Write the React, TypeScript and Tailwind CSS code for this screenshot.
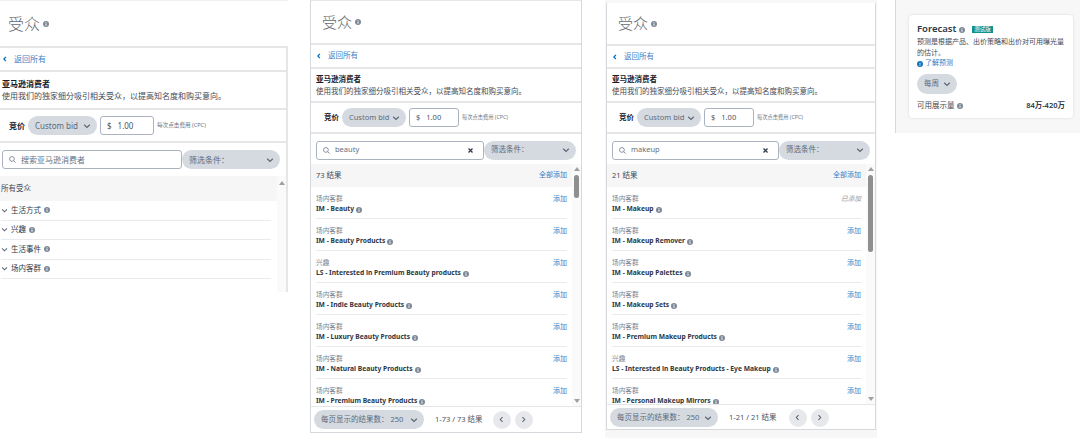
import React from "react";

const font = { fontFamily: '"Noto Sans", "Noto Sans CJK SC", sans-serif' };

function Info({ size = 6 }: { size?: number }) {
  return (
    <svg width={size} height={size} viewBox="0 0 10 10" className="inline-block shrink-0">
      <circle cx="5" cy="5" r="5" fill="#7d8998" />
      <rect x="4.2" y="4.2" width="1.6" height="3.6" fill="#fff" />
      <rect x="4.2" y="2.2" width="1.6" height="1.3" fill="#fff" />
    </svg>
  );
}

function Chevron({ dir = "down", size = 8, color = "#5b6675", width = 1.5 }: { dir?: "down" | "left" | "right"; size?: number; color?: string; width?: number }) {
  const d = dir === "down" ? "M1.5 3.5 5 6.8 8.5 3.5" : dir === "left" ? "M6.5 1.5 3.2 5 6.5 8.5" : "M3.5 1.5 6.8 5 3.5 8.5";
  return (
    <svg width={size} height={size} viewBox="0 0 10 10" fill="none" stroke={color} strokeWidth={width} className="shrink-0">
      <path d={d} />
    </svg>
  );
}

function Search() {
  return (
    <svg width="7" height="7" viewBox="0 0 10 10" fill="none" stroke="#7d8998" strokeWidth="1.3" className="shrink-0">
      <circle cx="4.2" cy="4.2" r="3.4" />
      <path d="M6.6 6.6 9.4 9.4" />
    </svg>
  );
}

function Pill({ className, children }: { className: string; children: React.ReactNode }) {
  return <div className={`flex items-center rounded-full bg-[#d5dae1] whitespace-nowrap text-[#5d6a79] ${className}`}>{children}</div>;
}

function Head({ h, pl, text }: { h: string; pl: string; text: string }) {
  return (
    <div className={`flex items-center gap-[3px] ${h} ${pl}`}>
      <span className={`leading-none font-light text-[#666b71] ${text}`}>受众</span>
      <Info />
    </div>
  );
}

function Intro({ pl, backH, descH }: { pl: string; backH: string; descH: string }) {
  return (
    <>
      <div className={`flex items-center gap-[6px] border-b-2 border-[#e4e6e8] ${backH} ${pl}`}>
        <Chevron dir="left" size={6} color="#0f6fc0" width={2.2} />
        <span className="text-[#3d84c6]">返回所有</span>
      </div>
      <div className={`flex flex-col justify-center border-b-2 border-[#e4e6e8] ${descH} ${pl}`}>
        <div className="leading-[12px] font-bold text-[#16202c]">亚马逊消费者</div>
        <div className="leading-[12px] whitespace-nowrap text-[#3f4a57]">使用我们的独家细分吸引相关受众，以提高知名度和购买意向。</div>
      </div>
    </>
  );
}

function Bid({ pl, h, pillW, inputW, unit }: { pl: string; h: string; pillW: string; inputW: string; unit: string }) {
  return (
    <div className={`flex items-center border-b-2 border-[#e4e6e8] ${h} ${pl}`}>
      <span className="mr-[3px] font-bold text-[#16202c]">竞价</span>
      <Pill className={`h-[19px] justify-between pr-[6px] pl-[7px] ${pillW}`}>
        <span>Custom bid</span>
        <Chevron />
      </Pill>
      <div className={`ml-[3px] flex h-[19px] items-center gap-[6px] rounded-[3px] border border-[#aab3bf] pl-[6px] text-[#4b5563] ${inputW}`}>
        <span>$</span>
        <span>1.00</span>
      </div>
      <span className={`ml-[3px] whitespace-nowrap text-[#6b7683] ${unit}`}>每次点击费用 (CPC)</span>
    </div>
  );
}

function SearchBar({ value, clear = false, h, pl, w, pillW }: { value: string; clear?: boolean; h: string; pl: string; w: string; pillW: string }) {
  return (
    <div className={`flex items-center ${h} ${pl}`}>
      <div className={`flex h-[19px] items-center gap-[5px] rounded-[3px] border border-[#aab3bf] px-[6px] text-[#66717e] ${w}`}>
        <Search />
        <span className="flex-1">{value}</span>
        {clear && (
          <svg width="5" height="5" viewBox="0 0 10 10" stroke="#333c47" strokeWidth="2.6" className="mr-[4px] shrink-0">
            <path d="M1 1 9 9M9 1 1 9" />
          </svg>
        )}
      </div>
      <Pill className={`h-[19px] justify-between pr-[6px] pl-[7px] ${pillW}`}>
        <span>筛选条件：</span>
        <Chevron />
      </Pill>
    </div>
  );
}

type Row = { cat: string; name: string; added?: boolean };

function Results({ count, rows, h, thumbH, listW }: { count: string; rows: Row[]; h: string; thumbH: string; listW: string }) {
  return (
    <div className={`flex ${h}`}>
      <div className={`overflow-hidden ${listW}`}>
        <div className="flex h-[23px] items-center justify-between bg-[#f6f6f6] pr-[5px] pl-[5px]">
          <span className="text-[7.5px] text-[#3f4a57]">{count}</span>
          <span className="text-[7px] text-[#2f7fc7]">全部添加</span>
        </div>
        <div className="pr-[5px] pl-[5px]">
          {rows.map((r) => (
            <div key={r.name} className="h-[32px] border-b border-[#e8eaec] pt-[7px]">
              <div className="flex h-[10px] items-center justify-between text-[6.7px] leading-[10px]">
                <span className="text-[#79838f]">{r.cat}</span>
                {r.added ? <span className="text-[#8b939c] italic">已添加</span> : <span className="text-[7px] text-[#3d84c6]">添加</span>}
              </div>
              <div className="flex h-[11px] items-center gap-[2px] text-[6.7px] font-bold whitespace-nowrap text-[#2c3744]">
                <span>{r.name}</span>
                <Info />
              </div>
            </div>
          ))}
        </div>
      </div>
      <div className="flex w-[9px] flex-col items-center bg-[#fafafa]">
        <div className="mt-[3px] h-0 w-0 border-x-[3px] border-b-[4px] border-x-transparent border-b-[#a0a0a0]" />
        <div className={`mt-[4px] w-[5px] rounded-full bg-[#8f8f8f] ${thumbH}`} />
        <div className="mt-auto mb-[3px] h-0 w-0 border-x-[3px] border-t-[4px] border-x-transparent border-t-[#a0a0a0]" />
      </div>
    </div>
  );
}

function Footer({ total, pillW, mr }: { total: string; pillW: string; mr: string }) {
  return (
    <div className="flex h-[26px] items-center border-t border-[#e4e6e8] pl-[3px]">
      <Pill className={`h-[19px] justify-between pr-[6px] pl-[7px] ${pillW}`}>
        <span>每页显示的结果数： 250</span>
        <Chevron />
      </Pill>
      <span className={`ml-[11px] whitespace-nowrap text-[#4b5563] ${mr}`}>{total}</span>
      <div className="flex h-[18px] w-[18px] items-center justify-center rounded-full bg-[#e6e8eb]"><Chevron dir="left" size={7} /></div>
      <div className="ml-[4px] flex h-[18px] w-[18px] items-center justify-center rounded-full bg-[#e6e8eb]"><Chevron dir="right" size={7} /></div>
    </div>
  );
}

const beauty: Row[] = [
  { cat: "场内客群", name: "IM - Beauty" },
  { cat: "场内客群", name: "IM - Beauty Products" },
  { cat: "兴趣", name: "LS - Interested in Premium Beauty products" },
  { cat: "场内客群", name: "IM - Indie Beauty Products" },
  { cat: "场内客群", name: "IM - Luxury Beauty Products" },
  { cat: "场内客群", name: "IM - Natural Beauty Products" },
  { cat: "场内客群", name: "IM - Premium Beauty Products" },
];

const makeup: Row[] = [
  { cat: "场内客群", name: "IM - Makeup", added: true },
  { cat: "场内客群", name: "IM - Makeup Remover" },
  { cat: "场内客群", name: "IM - Makeup Palettes" },
  { cat: "场内客群", name: "IM - Makeup Sets" },
  { cat: "场内客群", name: "IM - Premium Makeup Products" },
  { cat: "兴趣", name: "LS - Interested in Beauty Products - Eye Makeup" },
  { cat: "场内客群", name: "IM - Personal Makeup Mirrors" },
];

export default function App() {
  return (
    <div className="flex h-[441px] w-[1080px] overflow-hidden bg-white" style={font}>
      {/* Panel 1 */}
      <div className="h-[292px] w-[288px] shrink-0 border-t border-[#f0f0f0] text-[8px]">
        <Head h="h-[45px]" pl="pl-[8px]" text="text-[16px]" />
        <div className="h-[246px] border-t-2 border-r-2 border-[#e4e6e8]">
          <Intro pl="pl-[2px]" backH="h-[24px]" descH="h-[38px]" />
          <Bid pl="pl-[9px]" h="h-[33px]" pillW="w-[69px]" inputW="w-[54px]" unit="text-[5.6px]" />
          <SearchBar value="搜索亚马逊消费者" h="h-[33px]" pl="pl-[2px]" w="w-[180px]" pillW="w-[98px]" />
          <div className="flex h-[116px]">
            <div className="w-[277px]">
              <div className="flex h-[25px] items-center bg-[#f6f6f6] pl-[1px] text-[7.5px] text-[#3f4a57]">所有受众</div>
              <div className="pr-[6px] pl-[1px]">
                {["生活方式", "兴趣", "生活事件", "场内客群"].map((t) => (
                  <div key={t} className="flex h-[19.5px] items-center gap-[3px] border-b border-[#e8eaec] text-[7.5px] text-[#2c3744]">
                    <Chevron size={7} />
                    <span>{t}</span>
                    <Info />
                  </div>
                ))}
              </div>
            </div>
            <div className="flex flex-1 justify-center bg-[#fafafa] pt-[5px]">
              <div className="h-0 w-0 border-x-[3px] border-b-[4px] border-x-transparent border-b-[#a0a0a0]" />
            </div>
          </div>
        </div>
      </div>

      {/* Panel 2 */}
      <div className="ml-[22px] h-[433px] w-[272px] shrink-0 border border-[#d5d8dc] border-t-[#e4e6e8] bg-white text-[7.5px]">
        <Head h="h-[42px]" pl="pl-[11px]" text="text-[15px]" />
        <div className="border-t-2 border-[#e4e6e8]">
          <Intro pl="pl-[5px]" backH="h-[24px]" descH="h-[34px]" />
          <Bid pl="pl-[13px]" h="h-[31px]" pillW="w-[64px]" inputW="w-[50px]" unit="text-[5.25px]" />
          <SearchBar value="beauty" clear h="h-[30px] pt-[2px]" pl="pl-[5px]" w="w-[168px]" pillW="w-[92px]" />
          <Results count="73 结果" rows={beauty} h="h-[242px]" thumbH="h-[23px]" listW="w-[261px]" />
          <Footer total="1-73 / 73 结果" pillW="w-[110px]" mr="mr-[10px]" />
        </div>
      </div>

      {/* Panel 3 */}
      <div className="ml-[23px] flex h-[438px] w-[272px] shrink-0 flex-col bg-[#f7f7f7] pt-[3px] pr-[1px] pl-[1px] text-[7.5px]">
        <div className="h-[427px] border-x border-b border-[#d5d8dc] bg-white">
          <Head h="h-[41px]" pl="pl-[11px]" text="text-[15px]" />
          <div className="border-t-2 border-[#e4e6e8]">
            <Intro pl="pl-[5px]" backH="h-[23px]" descH="h-[34px]" />
            <Bid pl="pl-[12px]" h="h-[31px]" pillW="w-[64px]" inputW="w-[50px]" unit="text-[5.25px]" />
            <SearchBar value="makeup" clear h="h-[30px] pt-[2px]" pl="pl-[5px]" w="w-[167px]" pillW="w-[91px]" />
            <Results count="21 结果" rows={makeup} h="h-[240px]" thumbH="h-[77px]" listW="w-[259px]" />
            <Footer total="1-21 / 21 结果" pillW="w-[108px]" mr="mr-[12px]" />
          </div>
        </div>
      </div>

      {/* Panel 4 */}
      <div className="ml-[18px] h-[133px] flex-1 border-l border-[#d5d8dc] bg-[#f7f7f7] pt-[15px] pl-[13px]">
        <div className="h-[103px] w-[164px] rounded-[4px] bg-white px-[8px] pt-[9px] shadow-[0_0_3px_rgba(0,0,0,0.12)]">
          <div className="flex h-[11px] items-center gap-[3px]">
            <span className="text-[9.5px] font-semibold text-[#2c3744]">Forecast</span>
            <Info />
            <span className="ml-[4px] bg-[#16908c] px-[2px] text-[5.5px] leading-[7px] text-white">测试版</span>
          </div>
          <div className="mt-[1px] text-[7px] leading-[11px] text-[#3f4a57]">预测是根据产品、出价策略和出价对可用曝光量的估计。</div>
          <div className="flex h-[11px] items-center gap-[2px] text-[7px] text-[#2f7fc7]">
            <svg width="6" height="6" viewBox="0 0 10 10" className="shrink-0">
              <circle cx="5" cy="5" r="5" fill="#1574bb" />
              <rect x="4.3" y="6.6" width="1.4" height="1.4" fill="#fff" />
              <rect x="4.3" y="3" width="1.4" height="3" fill="#fff" />
            </svg>
            <span>了解预测</span>
          </div>
          <Pill className="mt-[5px] h-[20px] w-[40px] justify-between pr-[6px] pl-[7px] text-[7.5px]">
            <span>每周</span>
            <Chevron />
          </Pill>
          <div className="mt-[6px] flex h-[11px] items-center justify-between text-[7.5px]">
            <span className="flex items-center gap-[2px] text-[#3f4a57]">可用展示量<Info /></span>
            <span className="text-[7.5px] font-semibold text-[#2c3744]">84万-420万</span>
          </div>
        </div>
      </div>
    </div>
  );
}
